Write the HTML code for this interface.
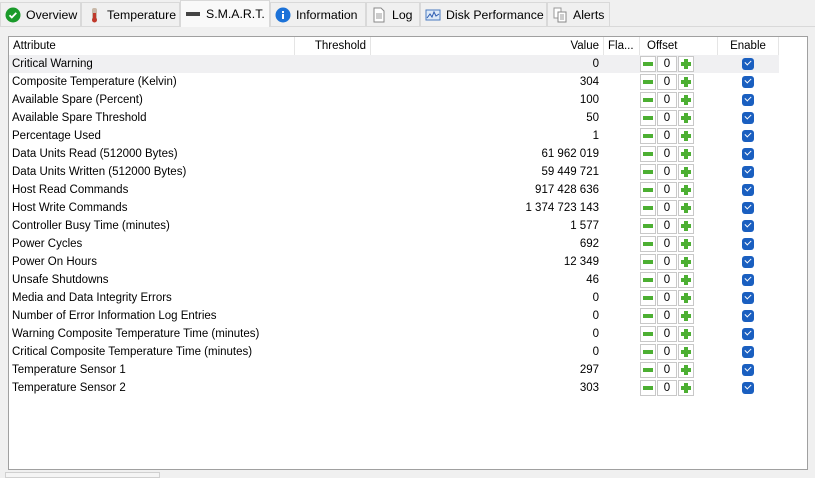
<!DOCTYPE html>
<html><head><meta charset="utf-8"><style>
*{margin:0;padding:0;box-sizing:border-box}
body{width:815px;height:476px;background:#f0f0f0;font-family:"Liberation Sans",sans-serif;font-size:11.5px;color:#000;position:relative;overflow:hidden}
.tabs{position:absolute;left:0;top:0;height:26px;width:815px;}
.tab{position:absolute;top:2px;height:24px;border:1px solid #d9d9d9;border-bottom:none;background:#f0f0f0;display:flex;align-items:center;padding-left:4px;gap:5px;font-size:12.3px}
.tab.sel{top:0;height:27px;background:#f9f9f9;z-index:2}
.line{position:absolute;left:0;top:26px;width:815px;border-top:1px solid #d9d9d9}
.panel{position:absolute;left:8px;top:36px;width:800px;height:434px;background:#fff;border:1px solid #a0a0a0}
.hdr{position:absolute;top:0;height:18px;line-height:18px;border-right:1px solid #e5e5e5;padding:0 4px}
.row{position:absolute;left:0;width:770px;height:18px;line-height:18px}
.row.g{background:#f0f0f2}
.c{position:absolute;top:0}
.mn,.pl,.nb{position:absolute;top:1px;height:16px;border:1px solid #c8c8c8;background:#fff}
.mn{left:631px;width:16px}
.nb{left:648px;width:20px;text-align:center;line-height:14px}
.pl{left:669px;width:16px}
.mn:after{content:"";position:absolute;left:2px;top:5px;width:10px;height:4px;background:#4caf32}
.pl:before{content:"";position:absolute;left:2px;top:5px;width:10px;height:4px;background:#4caf32}
.pl:after{content:"";position:absolute;left:5px;top:2px;width:4px;height:10px;background:#4caf32}
.cb{position:absolute;left:733px;top:3px;width:12px;height:12px;border-radius:3px;background:#1a5fc0}
.cb:after{content:"";position:absolute;left:3px;top:2px;width:5px;height:3px;border-left:1.5px solid #fff;border-bottom:1.5px solid #fff;transform:rotate(-45deg)}
</style></head><body>
<div class="tabs">
<div class="tab" style="left:0;width:81px"><svg width="16" height="16"><circle cx="8" cy="8" r="7.5" fill="#1a9a2a"/><path d="M4.5 8.2l2.3 2.3 4.5-4.6" stroke="#fff" stroke-width="1.8" fill="none"/></svg>Overview</div>
<div class="tab" style="left:81px;width:99px"><svg width="16" height="16"><rect x="6" y="1" width="5" height="13" rx="2" fill="#c8b8a8"/><rect x="7" y="6" width="3" height="8" fill="#c0392b"/><circle cx="8.5" cy="13" r="2.5" fill="#c0392b"/></svg>Temperature</div>
<div class="tab sel" style="left:180px;width:90px"><svg width="16" height="16"><rect x="1" y="6" width="14" height="4" fill="#444"/></svg>S.M.A.R.T.</div>
<div class="tab" style="left:270px;width:96px"><svg width="16" height="16"><circle cx="8" cy="8" r="7.5" fill="#1c72d8"/><rect x="7" y="7" width="2" height="5" fill="#fff"/><rect x="7" y="4" width="2" height="2" fill="#fff"/></svg>Information</div>
<div class="tab" style="left:366px;width:54px"><svg width="16" height="16"><path d="M3 1h7l3 3v11H3z" fill="#fff" stroke="#888"/><path d="M5 7h6M5 9h6M5 11h6" stroke="#999"/></svg>Log</div>
<div class="tab" style="left:420px;width:127px"><svg width="16" height="16"><rect x="1" y="3" width="14" height="10" fill="#dde9f7" stroke="#4a7ac0"/><path d="M2 11l3-4 2 3 2-5 2 4 3-2" stroke="#2a5ab0" fill="none"/></svg>Disk Performance</div>
<div class="tab" style="left:547px;width:63px"><svg width="16" height="16"><path d="M2 1h7v10H2z" fill="#fff" stroke="#999"/><path d="M6 5h8v10H6z" fill="#fff" stroke="#888"/><path d="M8 8h4M8 10h4M8 12h4" stroke="#999"/></svg>Alerts</div>
</div>
<div class="line"></div>
<div class="panel">
<div class="hdr" style="left:0;width:286px">Attribute</div>
<div class="hdr" style="left:286px;width:76px;text-align:right">Threshold</div>
<div class="hdr" style="left:362px;width:233px;text-align:right">Value</div>
<div class="hdr" style="left:595px;width:36px">Fla...</div>
<div class="hdr" style="left:631px;width:78px;padding-left:7px">Offset</div>
<div class="hdr" style="left:709px;width:61px;text-align:center">Enable</div>
<div id="rows"></div>
</div>
<div style="position:absolute;left:5px;top:472px;width:155px;height:6px;border:1px solid #d0d0d0;background:#f5f5f5"></div>
<script>
var d=[["Critical Warning","0"],["Composite Temperature (Kelvin)","304"],["Available Spare (Percent)","100"],["Available Spare Threshold","50"],["Percentage Used","1"],["Data Units Read (512000 Bytes)","61 962 019"],["Data Units Written (512000 Bytes)","59 449 721"],["Host Read Commands","917 428 636"],["Host Write Commands","1 374 723 143"],["Controller Busy Time (minutes)","1 577"],["Power Cycles","692"],["Power On Hours","12 349"],["Unsafe Shutdowns","46"],["Media and Data Integrity Errors","0"],["Number of Error Information Log Entries","0"],["Warning Composite Temperature Time (minutes)","0"],["Critical Composite Temperature Time (minutes)","0"],["Temperature Sensor 1","297"],["Temperature Sensor 2","303"]];
var h="";d.forEach(function(r,i){h+='<div class="row'+(i==0?' g':'')+'" style="top:'+(18+i*18)+'px"><span class="c" style="left:3px">'+r[0]+'</span><span class="c" style="right:180px">'+r[1]+'</span><div class="mn"></div><div class="nb">0</div><div class="pl"></div><div class="cb"></div></div>';});
document.getElementById("rows").innerHTML=h;
</script>
</body></html>
